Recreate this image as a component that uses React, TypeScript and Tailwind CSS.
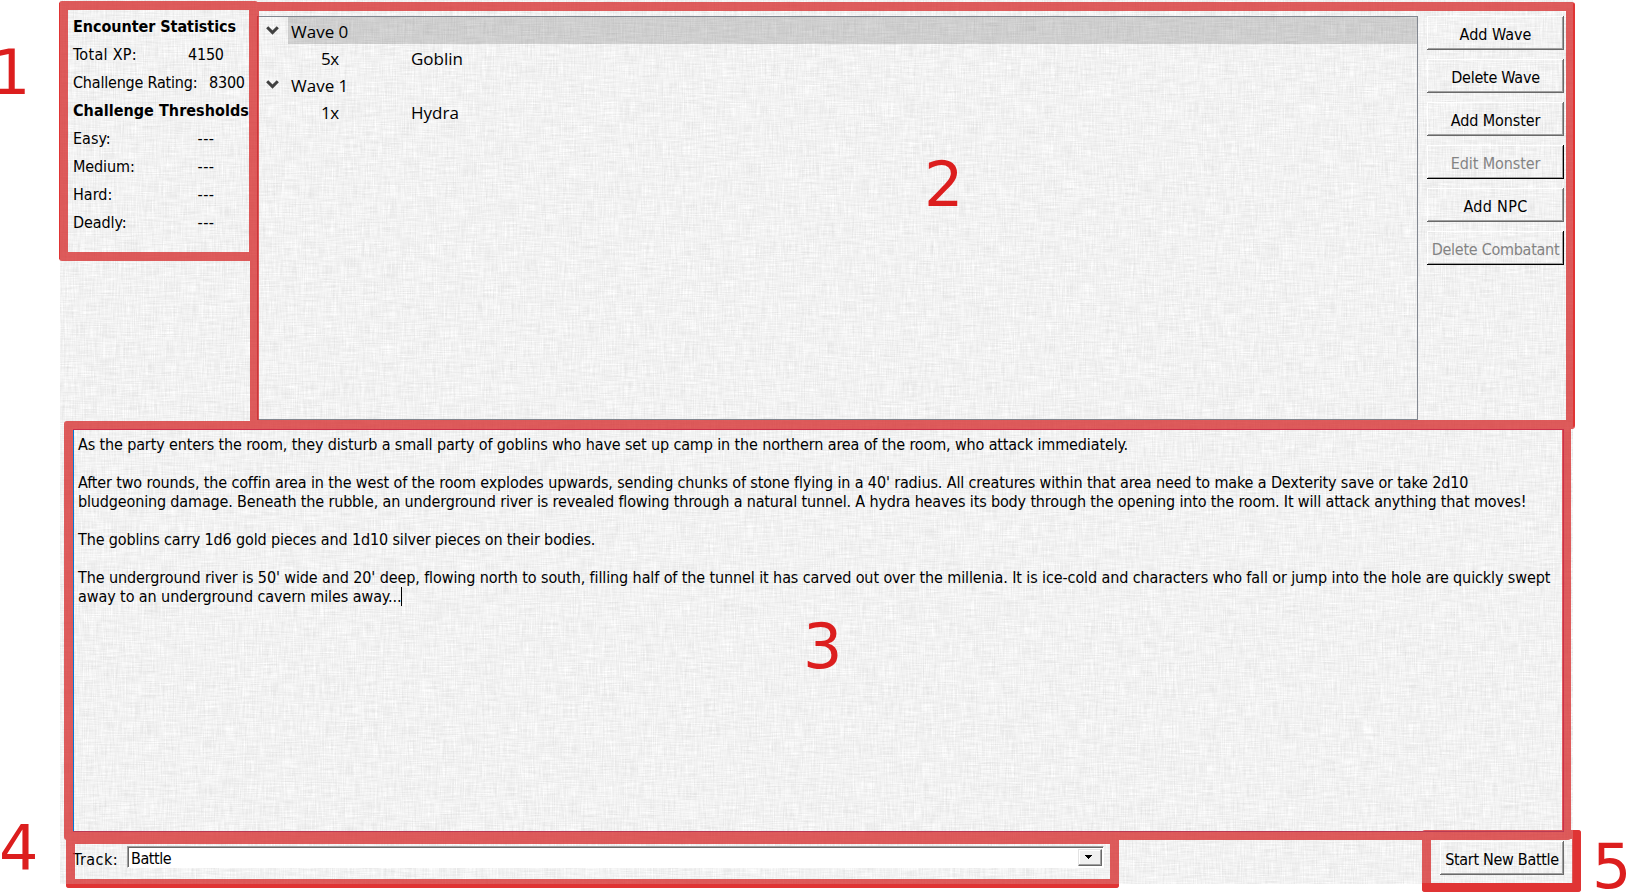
import type { ReactNode } from "react";

const label = "font-['DejaVu_Sans_Condensed','DejaVu_Sans',sans-serif] text-[16px]";

function LinenBackground() {
  return (
    <svg className="absolute inset-0 h-full w-full" aria-hidden="true">
      <filter id="linen" x="0" y="0" width="100%" height="100%" colorInterpolationFilters="sRGB">
        <feTurbulence type="fractalNoise" baseFrequency="0.05 0.9" numOctaves={2} seed={3} result="weft" />
        <feTurbulence type="fractalNoise" baseFrequency="0.9 0.05" numOctaves={2} seed={8} result="warp" />
        <feComposite in="weft" in2="warp" operator="arithmetic" k1="0" k2="0.5" k3="0.5" k4="0" />
        <feColorMatrix
          type="matrix"
          values="0.2 0 0 0 0.848  0.2 0 0 0 0.848  0.2 0 0 0 0.848  0 0 0 0 1"
        />
      </filter>
      <rect width="100%" height="100%" filter="url(#linen)" />
    </svg>
  );
}

function Stat({ name, value, tracking, wide }: { name: string; value: string; tracking: string; wide?: boolean }) {
  return (
    <div className="flex h-7 whitespace-nowrap leading-7">
      <span className={`shrink-0 ${wide ? "w-[131px]" : "w-[111px]"} ${tracking}`}>{name}</span>
      <span
        className={
          value === "---"
            ? "w-[44px] text-center tracking-[0.5px]"
            : wide
              ? "pl-[5px] tracking-[-0.2px]"
              : "w-[46px] pl-1 tracking-[-0.2px]"
        }
      >
        {value}
      </span>
    </div>
  );
}

function PushButton({
  children,
  disabled,
  className = "",
}: {
  children: ReactNode;
  disabled?: boolean;
  className?: string;
}) {
  return (
    <button
      disabled={disabled}
      className={`flex h-[34px] items-center justify-center whitespace-nowrap pt-[2px] leading-[19px] ${
        disabled
          ? "text-[#838383] shadow-[inset_-1px_-1px_0_#000,inset_1px_1px_0_#fff,inset_-2px_-2px_0_#a0a0a0]"
          : "text-black shadow-[inset_-1px_-1px_0_#696969,inset_1px_1px_0_#fff,inset_-2px_-2px_0_#a0a0a0]"
      } ${className}`}
    >
      {children}
    </button>
  );
}

function Chevron() {
  return (
    <svg className="h-[27px] w-[30px] shrink-0" viewBox="0 0 30 27" fill="none">
      <path d="M9.2 10.2 14.5 15.6 19.8 10.2" stroke="#404040" strokeWidth="3" />
    </svg>
  );
}

function WaveRow({ name, selected }: { name: string; selected?: boolean }) {
  return (
    <div className="flex h-[27px]">
      <Chevron />
      <span className={`flex-1 pl-[3px] pt-px ${selected ? "bg-black/[0.145]" : ""}`}>{name}</span>
    </div>
  );
}

function CombatantRow({ count, name }: { count: string; name: string }) {
  return (
    <div className="flex h-[27px] pl-[63px] pt-px">
      <span className="w-[90px] tracking-[-0.4px]">{count}</span>
      <span>{name}</span>
    </div>
  );
}

function Marker({ children, className }: { children: ReactNode; className: string }) {
  return (
    <span
      className={`absolute font-['DejaVu_Sans',sans-serif] text-[62px] leading-[62px] text-[#dc1e1e] ${className}`}
    >
      {children}
    </span>
  );
}

export default function App() {
  return (
    <div className={`relative h-[892px] w-[1628px] overflow-hidden bg-white text-black ${label}`}>
      <div className="relative ml-[60px] h-[884px] w-[1513px]">
        <LinenBackground />
        <div className="relative flex h-full flex-col">
          <div className="flex h-[429px]">
            <aside className="w-[197px] pl-[13px] pt-[13px]">
              <h2 className="h-7 whitespace-nowrap font-bold leading-7 tracking-[-0.05px]">Encounter Statistics</h2>
              <Stat name="Total XP:" value="4150" tracking="tracking-[0.3px]" />
              <Stat name="Challenge Rating:" value="8300" tracking="tracking-[-0.2px]" wide />
              <h2 className="h-7 whitespace-nowrap font-bold leading-7 tracking-[0.05px]">Challenge Thresholds</h2>
              <Stat name="Easy:" value="---" tracking="tracking-normal" />
              <Stat name="Medium:" value="---" tracking="tracking-[-0.1px]" />
              <Stat name="Hard:" value="---" tracking="tracking-normal" />
              <Stat name="Deadly:" value="---" tracking="tracking-[-0.1px]" />
            </aside>
            <div className="mt-4 h-[404px] w-[1161px] border border-[#828790] font-['Open_Sans','Noto_Sans',sans-serif] text-[17px] leading-[27px]">
              <WaveRow name="Wave 0" selected />
              <CombatantRow count="5x" name="Goblin" />
              <WaveRow name="Wave 1" />
              <CombatantRow count="1x" name="Hydra" />
            </div>
            <div className="ml-[9px] mt-4 flex w-[137px] flex-col gap-[9px]">
              <PushButton>Add Wave</PushButton>
              <PushButton className="tracking-[-0.25px]">Delete Wave</PushButton>
              <PushButton className="tracking-[-0.1px]">Add Monster</PushButton>
              <PushButton disabled className="tracking-[-0.1px]">Edit Monster</PushButton>
              <PushButton className="tracking-[0.3px]">Add NPC</PushButton>
              <PushButton disabled className="tracking-[-0.27px]">Delete Combatant</PushButton>
            </div>
          </div>

          <div className="ml-[13px] h-[403px] w-[1491px] whitespace-nowrap border border-[#0078d7] pl-1 pt-[5px] leading-[19px]">
            <p className="tracking-[-0.134px]">
              As the party enters the room, they disturb a small party of goblins who have set up camp in the northern
              area of the room, who attack immediately.
            </p>
            <p className="mt-[19px] tracking-[-0.137px]">
              After two rounds, the coffin area in the west of the room explodes upwards, sending chunks of stone flying
              in a 40' radius. All creatures within that area need to make a Dexterity save or take 2d10
            </p>
            <p className="tracking-[-0.15px]">
              bludgeoning damage. Beneath the rubble, an underground river is revealed flowing through a natural tunnel.
              A hydra heaves its body through the opening into the room. It will attack anything that moves!
            </p>
            <p className="mt-[19px] tracking-[-0.137px]">
              The goblins carry 1d6 gold pieces and 1d10 silver pieces on their bodies.
            </p>
            <p className="mt-[19px] tracking-[-0.108px]">
              The underground river is 50' wide and 20' deep, flowing north to south, filling half of the tunnel it has
              carved out over the millenia. It is ice-cold and characters who fall or jump into the hole are quickly
              swept
            </p>
            <p className="flex tracking-[-0.085px]">
              away to an underground cavern miles away...
              <span className="h-[19px] w-px bg-black" />
            </p>
          </div>

          <div className="flex flex-1 pl-[13px]">
            <span className="w-[54px] pt-[18px] leading-[19px] tracking-[0.45px]">Track:</span>
            <div className="mt-[14px] flex h-[22px] w-[977px] border border-[#a0a0a0] border-r-white border-b-white bg-white shadow-[inset_1px_1px_0_#696969]">
              <span className="flex-1 pl-[3px] pt-[2px] leading-[19px] tracking-[-0.45px]">Battle</span>
              <span className="mt-[2px] mr-[1px] flex h-[17px] w-6 justify-center border border-[#e3e3e3] border-r-[#696969] border-b-[#696969] bg-[#f0f0f0] pr-1 shadow-[inset_-1px_-1px_0_#a0a0a0,inset_1px_1px_0_#fff]">
                <svg className="mt-[5px] h-1 w-[7px]" viewBox="0 0 7 4" shapeRendering="crispEdges">
                  <path d="M0 0h7v1H6v1H5v1H4v1H3V3H2V2H1V1H0z" />
                </svg>
              </span>
            </div>
            <PushButton className="ml-[336px] mt-[9px] w-[124px] tracking-[-0.3px]">Start New Battle</PushButton>
          </div>
        </div>
      </div>

      <div className="pointer-events-none absolute inset-0 opacity-[0.77]">
        <div className="absolute left-[59px] top-px h-[260px] w-[199px] rounded-[3px] border-[9px] border-[#d72d2d]" />
        <div className="absolute left-[250px] top-[2px] h-[427px] w-[1325px] rounded-[3px] border-[9px] border-[#d72d2d]" />
        <div className="absolute left-[64px] top-[421px] h-[419px] w-[1507px] rounded-[3px] border-[9px] border-[#d72d2d]" />
        <div className="absolute left-[66px] top-[835px] h-[53px] w-[1053px] rounded-[3px] border-[9px] border-[#d72d2d]" />
        <div className="absolute left-[1422px] top-[830px] h-[62px] w-[159px] rounded-[3px] border-[9px] border-[#d72d2d]" />
      </div>

      <div className="pointer-events-none absolute inset-0">
        <div className="absolute left-[257px] top-4 h-[404px] w-px bg-[#cc3539]" />
        <div className="absolute left-[73px] top-[429px] h-px w-[1491px] bg-[#cc2f4b]" />
        <div className="absolute left-[1563px] top-[429px] h-[403px] w-px bg-[#cc2f4b]" />
        <div className="absolute left-[73px] top-[831px] h-px w-[1491px] bg-[#b83a55]" />
        <div className="absolute left-[59px] top-[3px] h-[256px] w-px bg-[#e03434]" />
        <div className="absolute left-[1573px] top-[3px] h-[424px] w-[2px] rounded-r-[2px] bg-[#e03434]" />
        <div className="absolute left-[66px] top-[884px] h-1 w-[1053px] rounded-b-[3px] bg-[#e03434]" />
        <div className="absolute left-[1422px] top-[883px] h-[9px] w-[159px] rounded-b-[3px] bg-[#e03434]" />
        <div className="absolute left-[1573px] top-[830px] h-[60px] w-2 rounded-tr-[3px] bg-[#e03434]" />
      </div>

      <Marker className="left-[-9px] top-[42px]">1</Marker>
      <Marker className="left-[924px] top-[154px]">2</Marker>
      <Marker className="left-[803px] top-[616px]">3</Marker>
      <Marker className="left-[-1px] top-[818px]">4</Marker>
      <Marker className="left-[1592px] top-[836px]">5</Marker>
    </div>
  );
}
